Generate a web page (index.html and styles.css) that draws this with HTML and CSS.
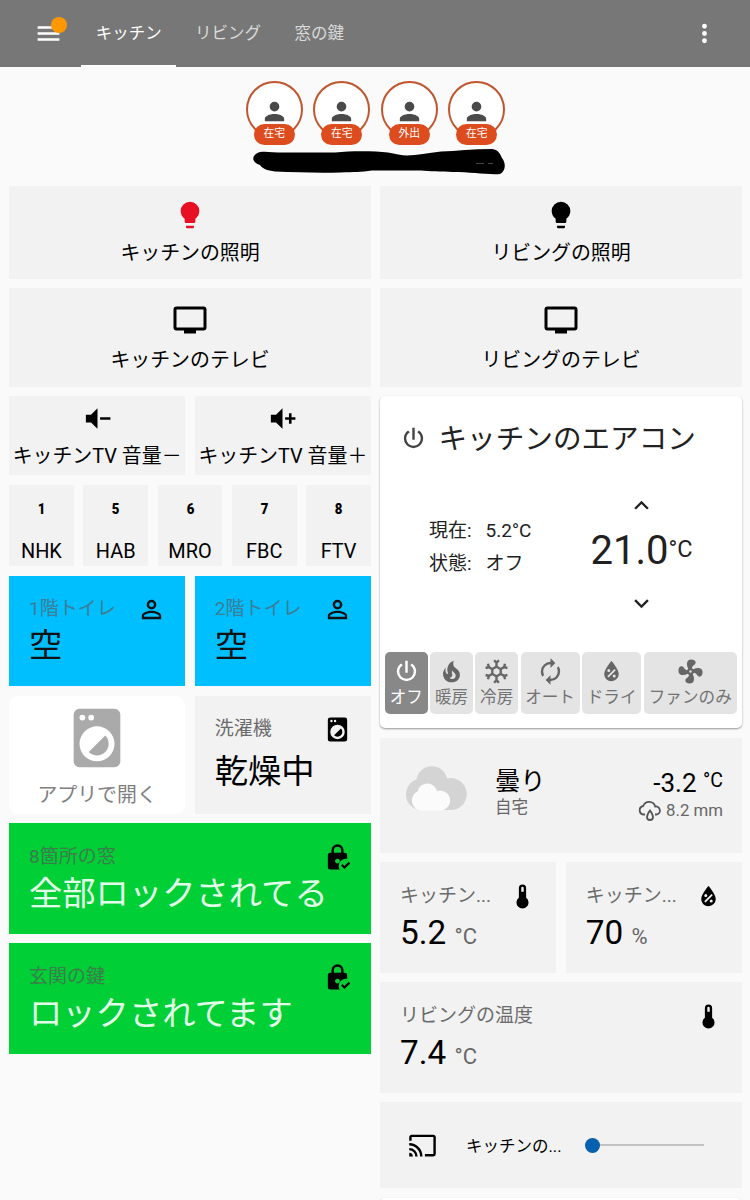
FILE: index.html
```
<!DOCTYPE html>
<html lang="ja">
<head>
    <meta charset="UTF-8">
    <meta name="viewport" content="width=device-width, initial-scale=1.0">
    <title>キッチン</title>
    <link rel="stylesheet" href="styles.css">
</head>
<body>

    <!-- Shared icons -->
    <svg class="icon-defs" width="0" height="0">
        <symbol id="bulb" viewBox="0 0 24 24"><path d="M12,2A7,7 0 0,0 5,9C5,11.38 6.19,13.47 8,14.74V17A1,1 0 0,0 9,18H15A1,1 0 0,0 16,17V14.74C17.81,13.47 19,11.38 19,9A7,7 0 0,0 12,2M9,21A1,1 0 0,0 10,22H14A1,1 0 0,0 15,21V20H9V21Z"/></symbol>
        <symbol id="tv" viewBox="0 0 24 24"><path d="M21,17H3V5H21M21,3H3A2,2 0 0,0 1,5V17A2,2 0 0,0 3,19H8V21H16V19H21A2,2 0 0,0 23,17V5A2,2 0 0,0 21,3Z"/></symbol>
        <symbol id="vol-minus" viewBox="0 0 24 24"><path d="M3,9H7L12,4V20L7,15H3V9M14,11H22V13H14V11Z"/></symbol>
        <symbol id="vol-plus" viewBox="0 0 24 24"><path d="M3,9H7L12,4V20L7,15H3V9M14,11H17V8H19V11H22V13H19V16H17V13H14V11Z"/></symbol>
        <symbol id="account" viewBox="0 0 24 24"><path d="M12,4A4,4 0 0,1 16,8A4,4 0 0,1 12,12A4,4 0 0,1 8,8A4,4 0 0,1 12,4M12,14C16.42,14 20,15.79 20,18V20H4V18C4,15.79 7.58,14 12,14Z"/></symbol>
        <symbol id="account-outline" viewBox="0 0 24 24"><path d="M12,4A4,4 0 0,1 16,8A4,4 0 0,1 12,12A4,4 0 0,1 8,8A4,4 0 0,1 12,4M12,6A2,2 0 0,0 10,8A2,2 0 0,0 12,10A2,2 0 0,0 14,8A2,2 0 0,0 12,6M12,13C14.67,13 20,14.33 20,17V20H4V17C4,14.33 9.33,13 12,13M12,14.9C9.03,14.9 5.9,16.36 5.9,17V18.1H18.1V17C18.1,16.36 14.97,14.9 12,14.9Z"/></symbol>
        <symbol id="washer" viewBox="0 0 24 24"><path d="M14.83,11.17C16.39,12.73 16.39,15.27 14.83,16.83C13.27,18.39 10.73,18.39 9.17,16.83L14.83,11.17M6,2H18A2,2 0 0,1 20,4V20A2,2 0 0,1 18,22H6A2,2 0 0,1 4,20V4A2,2 0 0,1 6,2M7,4A1,1 0 0,0 6,5A1,1 0 0,0 7,6A1,1 0 0,0 8,5A1,1 0 0,0 7,4M10,4A1,1 0 0,0 9,5A1,1 0 0,0 10,6A1,1 0 0,0 11,5A1,1 0 0,0 10,4M12,8A6,6 0 0,0 6,14A6,6 0 0,0 12,20A6,6 0 0,0 18,14A6,6 0 0,0 12,8Z"/></symbol>
        <symbol id="lock-check" viewBox="0 0 24 24"><path fill-rule="evenodd" d="M18,8A2,2 0 0,1 20,10V13.1C19.7,13 19.3,13 19,13C15.7,13 13,15.7 13,19C13,20.1 13.3,21.1 13.8,22H6A2,2 0 0,1 4,20V10A2,2 0 0,1 6,8H7V6A5,5 0 0,1 17,6V8H18M12,3A3,3 0 0,0 9,6V8H15V6A3,3 0 0,0 12,3M12,13A2,2 0 1,0 13.4,16.4L14,15A2,2 0 0,0 12,13Z"/><path d="M17.75,21.6L14.9,18.6L16.1,17.4L17.75,19L21.3,15.5L22.5,16.9Z"/></symbol>
        <symbol id="power" viewBox="0 0 24 24"><path d="M16.56,5.44L15.11,6.89C16.84,7.94 18,9.83 18,12A6,6 0 0,1 12,18A6,6 0 0,1 6,12C6,9.83 7.16,7.94 8.88,6.88L7.44,5.44C5.36,6.88 4,9.28 4,12A8,8 0 0,0 12,20A8,8 0 0,0 20,12C20,9.28 18.64,6.88 16.56,5.44M13,3H11V13H13"/></symbol>
        <symbol id="fire" viewBox="0 0 24 24"><path d="M17.66 11.2C17.43 10.9 17.15 10.64 16.89 10.38C16.22 9.78 15.46 9.35 14.82 8.72C13.33 7.26 13 4.85 13.95 3C13 3.23 12.17 3.75 11.46 4.32C8.87 6.4 7.85 10.07 9.07 13.22C9.11 13.32 9.15 13.42 9.15 13.55C9.15 13.77 9 13.97 8.8 14.05C8.57 14.15 8.33 14.09 8.14 13.93C8.08 13.88 8.04 13.83 8 13.76C6.87 12.33 6.69 10.28 7.45 8.64C5.78 10 4.87 12.3 5 14.47C5.06 14.97 5.12 15.47 5.29 15.97C5.43 16.57 5.7 17.17 6 17.7C7.08 19.43 8.95 20.67 10.96 20.92C13.1 21.19 15.39 20.8 17.03 19.32C18.86 17.66 19.5 15 18.56 12.72L18.43 12.46C18.22 12 17.66 11.2 17.66 11.2M14.5 17.5C14.22 17.74 13.76 18 13.4 18.1C12.28 18.5 11.16 17.94 10.5 17.28C11.69 17 12.4 16.12 12.61 15.23C12.78 14.43 12.46 13.77 12.33 13C12.21 12.26 12.23 11.63 12.5 10.94C12.69 11.32 12.89 11.7 13.13 12C13.9 13 15.11 13.44 15.37 14.8C15.41 14.94 15.43 15.08 15.43 15.23C15.46 16.05 15.1 16.95 14.5 17.5H14.5Z"/></symbol>
        <symbol id="snow" viewBox="0 0 24 24"><path d="M20.79,13.95L18.46,14.57L16.46,13.44V10.56L18.46,9.43L20.79,10.05L21.31,8.12L19.54,7.65L20,5.88L18.07,5.36L17.45,7.69L15.45,8.82L13,7.38V5.12L14.71,3.41L13.29,2L12,3.29L10.71,2L9.29,3.41L11,5.12V7.38L8.5,8.82L6.5,7.69L5.92,5.36L4,5.88L4.47,7.65L2.7,8.12L3.22,10.05L5.55,9.43L7.55,10.56V13.45L5.55,14.58L3.22,13.96L2.7,15.89L4.47,16.36L4,18.12L5.93,18.64L6.55,16.31L8.55,15.18L11,16.62V18.88L9.29,20.59L10.71,22L12,20.71L13.29,22L14.7,20.59L13,18.88V16.62L15.5,15.17L17.5,16.3L18.12,18.63L20,18.12L19.53,16.35L21.3,15.88L20.79,13.95M9.5,10.56L12,9.11L14.5,10.56V13.44L12,14.89L9.5,13.44V10.56Z"/></symbol>
        <symbol id="auto" viewBox="0 0 24 24"><path d="M12,6V9L16,5L12,1V4A8,8 0 0,0 4,12C4,13.57 4.46,15.03 5.24,16.26L6.7,14.8C6.25,13.97 6,13 6,12A6,6 0 0,1 12,6M18.76,7.74L17.3,9.2C17.74,10.04 18,11 18,12A6,6 0 0,1 12,18V15L8,19L12,23V20A8,8 0 0,0 20,12C20,10.43 19.54,8.97 18.76,7.74Z"/></symbol>
        <symbol id="humidity" viewBox="0 0 24 24"><path fill-rule="evenodd" d="M12,3.25C12,3.25 6,10 6,14C6,17.32 8.69,20 12,20A6,6 0 0,0 18,14C18,10 12,3.25 12,3.25M14.47,9.97L15.53,11.03L9.53,17.03L8.47,15.97M9.75,10A1.25,1.25 0 0,1 11,11.25A1.25,1.25 0 0,1 9.75,12.5A1.25,1.25 0 0,1 8.5,11.25A1.25,1.25 0 0,1 9.75,10M14.25,14.5A1.25,1.25 0 0,1 15.5,15.75A1.25,1.25 0 0,1 14.25,17A1.25,1.25 0 0,1 13,15.75A1.25,1.25 0 0,1 14.25,14.5Z"/></symbol>
        <symbol id="fan" viewBox="0 0 24 24"><path d="M12,11A1,1 0 0,0 11,12A1,1 0 0,0 12,13A1,1 0 0,0 13,12A1,1 0 0,0 12,11M12.5,2C17,2 17.11,5.57 14.75,6.75C13.76,7.24 13.32,8.29 13.13,9.22C13.61,9.42 14.03,9.73 14.35,10.13C18.05,8.13 22.03,8.92 22.03,12.5C22.03,17 18.46,17.1 17.28,14.73C16.78,13.74 15.72,13.3 14.79,13.11C14.59,13.59 14.28,14 13.88,14.34C15.87,18.03 15.08,22 11.5,22C7,22 6.91,18.42 9.27,17.24C10.25,16.75 10.69,15.71 10.89,14.79C10.4,14.59 9.97,14.27 9.65,13.87C5.96,15.85 2,15.07 2,11.5C2,7 5.56,6.89 6.74,9.26C7.24,10.25 8.29,10.68 9.22,10.87C9.41,10.39 9.73,9.97 10.14,9.65C8.15,5.96 8.94,2 12.5,2Z"/></symbol>
        <symbol id="thermometer" viewBox="0 0 24 24"><path fill-rule="evenodd" d="M15,13V5A3,3 0 0,0 9,5V13A5,5 0 1,0 15,13M12,4A1,1 0 0,1 13,5V8H11V5A1,1 0 0,1 12,4Z"/></symbol>
        <symbol id="cast" viewBox="0 0 24 24"><path d="M1,10V12A9,9 0 0,1 10,21H12C12,14.92 7.07,10 1,10M1,14V16A5,5 0 0,1 6,21H8A7,7 0 0,0 1,14M1,18V21H4A3,3 0 0,0 1,18M21,3H3C1.89,3 1,3.89 1,5V8H3V5H21V19H14V21H21A2,2 0 0,0 23,19V5C23,3.89 22.1,3 21,3Z"/></symbol>
        <symbol id="up" viewBox="0 0 24 24"><path d="M7.41,15.41L12,10.83L16.59,15.41L18,14L12,8L6,14L7.41,15.41Z"/></symbol>
        <symbol id="down" viewBox="0 0 24 24"><path d="M7.41,8.58L12,13.17L16.59,8.58L18,10L12,16L6,10L7.41,8.58Z"/></symbol>
    </svg>

    <header class="toolbar">
        <div class="menu">
            <svg class="icon" viewBox="0 0 24 24"><path d="M3,6H21V8H3V6M3,11H21V13H3V11M3,16H21V18H3V16Z"/></svg>
            <span class="dot"></span>
        </div>
        <nav class="tabs">
            <a class="tab active">キッチン</a>
            <a class="tab">リビング</a>
            <a class="tab">窓の鍵</a>
        </nav>
        <svg class="icon more" viewBox="0 0 24 24"><path d="M12,16A2,2 0 1,1 12,20A2,2 0 1,1 12,16M12,10A2,2 0 1,1 12,14A2,2 0 1,1 12,10M12,4A2,2 0 1,1 12,8A2,2 0 1,1 12,4Z"/></svg>
    </header>

    <div class="badges">
        <div class="badge"><svg class="icon"><use href="#account"/></svg><span>在宅</span></div>
        <div class="badge"><svg class="icon"><use href="#account"/></svg><span>在宅</span></div>
        <div class="badge"><svg class="icon"><use href="#account"/></svg><span>外出</span></div>
        <div class="badge"><svg class="icon"><use href="#account"/></svg><span>在宅</span></div>
    </div>
    <svg class="marker" viewBox="0 0 252 27" width="252" height="27">
        <path d="M7,3C13,2 20,3.500 30,3.500H82C100,1.500 122,2 135,3.500C142,5 149,6.500 154,6.500C164,6 175,4 188,2.500C203,2 220,0 239,0C246,1 247,5 249,9C253,14 253,22 247,25C235,26 218,23 200,23C188,22.500 176,22.500 168,21.500H119C108,23 100,23 88,23.500C65,24 45,23.500 22,22.500C14,21.500 9,19.500 7,16C-2,13-2,6 7,3Z"/>
        <path class="scratch" d="M223,14.500H231M235,14.500H240"/>
    </svg>

    <main class="columns">
        <div class="column">
            <div class="card tile light">
                <svg class="icon on"><use href="#bulb"/></svg>
                <span>キッチンの照明</span>
            </div>
            <div class="card tile tv">
                <svg class="icon"><use href="#tv"/></svg>
                <span>キッチンのテレビ</span>
            </div>
            <div class="row">
                <div class="card tile volume">
                    <svg class="icon"><use href="#vol-minus"/></svg>
                    <span>キッチンTV 音量－</span>
                </div>
                <div class="card tile volume">
                    <svg class="icon"><use href="#vol-plus"/></svg>
                    <span>キッチンTV 音量＋</span>
                </div>
            </div>
            <div class="row">
                <div class="card tile channel"><b>1</b><span>NHK</span></div>
                <div class="card tile channel"><b>5</b><span>HAB</span></div>
                <div class="card tile channel"><b>6</b><span>MRO</span></div>
                <div class="card tile channel"><b>7</b><span>FBC</span></div>
                <div class="card tile channel"><b>8</b><span>FTV</span></div>
            </div>
            <div class="row">
                <div class="card sensor vacant">
                    <div class="head"><span class="name">1階トイレ</span><svg class="icon"><use href="#account-outline"/></svg></div>
                    <div class="value">空</div>
                </div>
                <div class="card sensor vacant">
                    <div class="head"><span class="name">2階トイレ</span><svg class="icon"><use href="#account-outline"/></svg></div>
                    <div class="value">空</div>
                </div>
            </div>
            <div class="row">
                <div class="card tile app">
                    <svg class="icon"><use href="#washer"/></svg>
                    <span>アプリで開く</span>
                </div>
                <div class="card sensor washer">
                    <div class="head"><span class="name">洗濯機</span><svg class="icon"><use href="#washer"/></svg></div>
                    <div class="value">乾燥中</div>
                </div>
            </div>
            <div class="card sensor locked">
                <div class="head"><span class="name">8箇所の窓</span><svg class="icon"><use href="#lock-check"/></svg></div>
                <div class="value">全部ロックされてる</div>
            </div>
            <div class="card sensor locked">
                <div class="head"><span class="name">玄関の鍵</span><svg class="icon"><use href="#lock-check"/></svg></div>
                <div class="value">ロックされてます</div>
            </div>
        </div>

        <div class="column">
            <div class="card tile light">
                <svg class="icon"><use href="#bulb"/></svg>
                <span>リビングの照明</span>
            </div>
            <div class="card tile tv">
                <svg class="icon"><use href="#tv"/></svg>
                <span>リビングのテレビ</span>
            </div>

            <div class="card climate">
                <div class="title">
                    <svg class="icon"><use href="#power"/></svg>
                    <h2>キッチンのエアコン</h2>
                </div>
                <div class="body">
                    <table>
                        <tr><th>現在:</th><td>5.2°C</td></tr>
                        <tr><th>状態:</th><td>オフ</td></tr>
                    </table>
                    <div class="target">
                        <svg class="icon"><use href="#up"/></svg>
                        <div class="degrees">21.0<small>°C</small></div>
                        <svg class="icon"><use href="#down"/></svg>
                    </div>
                </div>
                <div class="modes">
                    <div class="mode active"><svg class="icon"><use href="#power"/></svg>オフ</div>
                    <div class="mode"><svg class="icon"><use href="#fire"/></svg>暖房</div>
                    <div class="mode"><svg class="icon"><use href="#snow"/></svg>冷房</div>
                    <div class="mode wide"><svg class="icon"><use href="#auto"/></svg>オート</div>
                    <div class="mode wide"><svg class="icon"><use href="#humidity"/></svg>ドライ</div>
                    <div class="mode widest"><svg class="icon"><use href="#fan"/></svg>ファンのみ</div>
                </div>
            </div>

            <div class="card weather">
                <svg class="cloud" viewBox="0 0 63 46" width="63" height="46">
                    <path fill="#d4d4d4" d="M15.500,45A15.700,15.700 0 0,1 11.500,14.500A15.500,15.500 0 0,1 42,13.500A16,16 0 1,1 47,45Z"/>
                    <path fill="#fbfbfb" d="M16,45.500A10,10 0 0,1 12.500,26.500A10,10 0 0,1 32,26A10,10 0 1,1 35,45.500Z"/>
                </svg>
                <div class="condition">
                    <div class="state">曇り</div>
                    <div class="place">自宅</div>
                </div>
                <div class="reading">
                    <div class="temp">-3.2 <small>°C</small></div>
                    <div class="rain">
                        <svg viewBox="0 0 24 22" width="24" height="22"><path d="M7,14.500H5.500A4.300,4.300 0 0,1 5.200,6A6.300,6.300 0 0,1 17.200,6.500A4,4 0 0,1 18.500,14.500H17M12,10.500C10.500,12.500 9,14.800 9,17A3,3 0 0,0 15,17C15,14.800 13.500,12.500 12,10.500Z"/></svg>
                        <span>8.2 mm</span>
                    </div>
                </div>
            </div>

            <div class="row">
                <div class="card sensor">
                    <div class="head"><span class="name">キッチン...</span><svg class="icon"><use href="#thermometer"/></svg></div>
                    <div class="value">5.2 <small>°C</small></div>
                </div>
                <div class="card sensor">
                    <div class="head"><span class="name">キッチン...</span><svg class="icon"><use href="#humidity"/></svg></div>
                    <div class="value">70 <small>%</small></div>
                </div>
            </div>
            <div class="card sensor">
                <div class="head"><span class="name">リビングの温度</span><svg class="icon"><use href="#thermometer"/></svg></div>
                <div class="value">7.4 <small>°C</small></div>
            </div>

            <div class="card player">
                <svg class="icon"><use href="#cast"/></svg>
                <span>キッチンの...</span>
                <div class="slider"><i></i></div>
            </div>
            <div class="card next"></div>
        </div>
    </main>

</body>
</html>
```

FILE: styles.css
```
* {
    box-sizing: border-box;
}
body {
    margin: 0;
    height: 1200px;
    overflow: hidden;
    background-color: #fafafa;
    color: #000;
    font-family: Roboto, "Noto Sans CJK JP", sans-serif;
    font-size: 20px;
}
.icon-defs {
    position: absolute;
}
.icon {
    display: block;
    flex: none;
    width: 29px;
    height: 29px;
    fill: currentColor;
}

/* Toolbar */
.toolbar {
    display: flex;
    align-items: center;
    height: 67px;
    padding: 0 31.5px 0 33.5px;
    background-color: #777;
    color: #fff;
}
.menu {
    position: relative;
    width: 47.5px;
}
.dot {
    position: absolute;
    left: 17px;
    top: -2px;
    width: 16px;
    height: 16px;
    border-radius: 50%;
    background-color: #ff9800;
}
.tabs {
    display: flex;
    flex: 1;
    height: 67px;
}
.tab {
    padding: 0 14.7px;
    font-size: 16.5px;
    line-height: 67px;
    height: 67px;
    color: #d9d9d9;
    margin-right: 4px;
}
.tab.active {
    color: #fff;
    box-shadow: inset 0 -2px #fff;
}

/* Person badges */
.badges {
    display: flex;
    justify-content: center;
    gap: 10.5px;
    height: 82px;
    padding: 14px 0 0 1px;
}
.badge {
    position: relative;
    width: 57px;
    height: 57px;
    padding: 13.5px 0 0 12px;
    border: 2px solid #c0562f;
    border-radius: 50%;
    background-color: #fff;
    color: #4a4a4a;
}
.badge span {
    position: absolute;
    left: 6px;
    top: 41px;
    width: 41px;
    height: 21px;
    border-radius: 11px;
    background-color: #dd4c1e;
    color: #fff;
    font-size: 10.8px;
    line-height: 20px;
    text-align: center;
}
.marker {
    display: block;
    margin: 0 0 9.5px 253px;
}
.scratch {
    stroke: #777;
    stroke-width: 0.6;
}

/* Columns */
.columns {
    display: grid;
    grid-template-columns: 362px 362px;
    gap: 9px;
    padding-left: 9px;
}
.column {
    display: flex;
    flex-direction: column;
    gap: 9.5px;
}
.row {
    display: grid;
    grid-auto-flow: column;
    grid-auto-columns: minmax(0, 1fr);
    gap: 9.5px;
}
.card {
    flex: none;
    background-color: #f2f2f2;
}

/* Buttons */
.tile {
    display: flex;
    flex-direction: column;
    align-items: center;
    white-space: nowrap;
    font-size: 19.9px;
    line-height: 24px;
}
.light {
    height: 93px;
    padding-top: 13.5px;
}
.light .icon {
    width: 32px;
    height: 32px;
    margin-bottom: 10.5px;
}
.light .on {
    color: #e81123;
}
.tv {
    height: 98.5px;
    padding-top: 14px;
}
.tv .icon {
    width: 36px;
    height: 36px;
    margin-bottom: 10.5px;
}
.volume {
    height: 79px;
    padding-top: 7px;
}
.volume .icon {
    width: 31px;
    height: 31px;
    margin-bottom: 10.5px;
}
.channel {
    height: 81.5px;
    padding-top: 12px;
}
.channel b {
    font-size: 15.5px;
    font-weight: 900;
    transform: scaleX(0.85);
    margin-bottom: 19.5px;
}
.app {
    height: 118px;
    padding-top: 7.5px;
    border-radius: 9px;
    background-color: #fff;
    color: #808080;
}
.app .icon {
    width: 70px;
    height: 70px;
    margin-bottom: 11px;
    color: #aaa;
}

/* Sensors */
.sensor {
    height: 110.5px;
    padding: 19.5px 19px 0 20px;
}
.head {
    display: flex;
    justify-content: space-between;
    height: 31px;
}
.name {
    font-size: 19px;
    line-height: 28px;
    color: #6b6b6b;
    white-space: nowrap;
}
.value {
    font-size: 33.3px;
    line-height: 40px;
    white-space: nowrap;
}
.value small {
    font-size: 22px;
    color: #666;
}
.vacant {
    background-color: #00bfff;
    color: #111;
}
.vacant .name {
    color: #3d7d95;
}
.washer {
    height: 118px;
}
.washer .value {
    margin-top: 6px;
}
.locked {
    background-color: #00cf35;
}
.locked .name {
    color: #3b7e4c;
}
.locked .value {
    color: #e4ffe9;
}

/* Air conditioner */
.climate {
    height: 332px;
    padding: 21.5px 5px 0;
    border-radius: 5px;
    background-color: #fff;
    box-shadow: 0 1px 2px rgba(0, 0, 0, 0.4);
    color: #212121;
}
.title {
    display: flex;
    align-items: center;
    height: 42px;
    padding-left: 14px;
}
.title .icon {
    color: #444;
}
.title h2 {
    margin: 0 0 0 10.5px;
    font-size: 28.6px;
    font-weight: 400;
    line-height: 42px;
}
.body {
    display: flex;
    justify-content: space-between;
    height: 192.5px;
    padding: 31.5px 40.5px 0 44px;
}
.body table {
    margin-top: 23px;
    height: 66px;
    border-collapse: collapse;
    font-size: 19px;
    line-height: 24px;
}
.body th, .body td {
    padding: 0;
    font-weight: 400;
    text-align: left;
}
.body td {
    padding-left: 14px;
}
.target {
    display: flex;
    flex-direction: column;
    align-items: center;
    width: 110px;
}
.degrees {
    display: flex;
    font-size: 40px;
    line-height: 60px;
    margin: 1px 0 8px;
}
.degrees small {
    font-size: 23.5px;
    line-height: 57px;
}
.target .icon {
    color: #212121;
}
.modes {
    display: flex;
    gap: 2.6px;
}
.mode {
    display: flex;
    flex-direction: column;
    align-items: center;
    width: 42.6px;
    height: 62px;
    padding-top: 5px;
    border-radius: 5px;
    background-color: #e4e4e4;
    color: #737373;
    font-size: 16.6px;
    line-height: 20px;
    white-space: nowrap;
}
.mode .icon {
    margin-bottom: 2px;
    color: #666;
}
.mode.active, .mode.active .icon {
    background-color: #888;
    color: #fff;
}
.wide {
    width: 59px;
}
.widest {
    width: 93px;
}

/* Weather */
.weather {
    display: flex;
    height: 115px;
    padding: 27px 19px 0 25px;
}
.condition {
    flex: 1;
    padding: 1.5px 0 0 27px;
}
.state {
    font-size: 25.3px;
    line-height: 32px;
}
.place {
    font-size: 16.5px;
    line-height: 20px;
    color: #666;
}
.reading {
    text-align: right;
}
.temp {
    font-size: 26px;
    line-height: 31px;
}
.temp small {
    font-size: 19.5px;
    vertical-align: 5px;
}
.rain {
    display: flex;
    justify-content: flex-end;
    gap: 4px;
    font-size: 16.8px;
    line-height: 23px;
    color: #666;
}
.rain svg {
    fill: none;
    stroke: #555;
    stroke-width: 1.8;
    margin-top: 1px;
}

/* Media player */
.player {
    display: flex;
    align-items: center;
    height: 86px;
    padding: 0 38px 0 28px;
    font-size: 16.5px;
}
.player span {
    width: 119px;
    margin-left: 29px;
}
.slider {
    display: flex;
    align-items: center;
    flex: 1;
    height: 15px;
    background: linear-gradient(#c2c2c2, #c2c2c2) center / 100% 2px no-repeat;
}
.slider i {
    width: 15px;
    height: 15px;
    border-radius: 50%;
    background-color: #0560b0;
}
.next {
    height: 20px;
    border-radius: 5px;
    background-color: #fff;
    box-shadow: 0 1px 2px rgba(0, 0, 0, 0.4);
}
```
